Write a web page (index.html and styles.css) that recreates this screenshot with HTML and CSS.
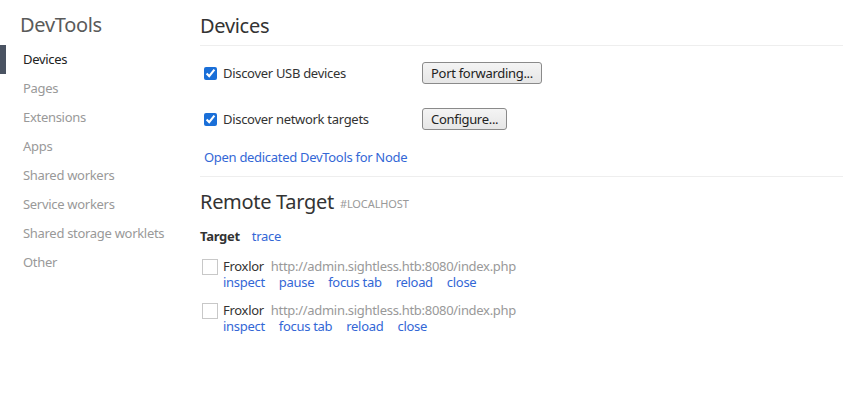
FILE: index.html
```html
<!DOCTYPE html>
<html>
<head>
<meta charset="utf-8">
<link rel="stylesheet" href="styles.css">
</head>
<body>
<div class="page">
  <nav class="sidebar">
    <h1 class="side-title">DevTools</h1>
    <ul class="side-list">
      <li class="side-item active">Devices</li>
      <li class="side-item">Pages</li>
      <li class="side-item">Extensions</li>
      <li class="side-item">Apps</li>
      <li class="side-item">Shared workers</li>
      <li class="side-item">Service workers</li>
      <li class="side-item">Shared storage worklets</li>
      <li class="side-item">Other</li>
    </ul>
  </nav>
  <main class="main">
    <h2 class="page-title">Devices</h2>
    <section class="settings">
      <div class="setting-row">
        <label class="setting-label"><input type="checkbox" class="cb" checked>Discover USB devices</label>
        <button class="btn">Port forwarding...</button>
      </div>
      <div class="setting-row">
        <label class="setting-label"><input type="checkbox" class="cb" checked>Discover network targets</label>
        <button class="btn">Configure...</button>
      </div>
      <div class="node-link"><a class="link">Open dedicated DevTools for Node</a></div>
    </section>
    <h2 class="section-title">Remote Target <span class="host">#LOCALHOST</span></h2>
    <div class="target-head"><span class="target-label">Target</span><a class="link">trace</a></div>
    <div class="target">
      <span class="box"></span>
      <div class="target-body">
        <div class="target-name"><span class="name">Froxlor</span><span class="url">http://admin.sightless.htb:8080/index.php</span></div>
        <div class="actions"><a class="link">inspect</a><a class="link">pause</a><a class="link">focus tab</a><a class="link">reload</a><a class="link">close</a></div>
      </div>
    </div>
    <div class="target">
      <span class="box"></span>
      <div class="target-body">
        <div class="target-name"><span class="name">Froxlor</span><span class="url">http://admin.sightless.htb:8080/index.php</span></div>
        <div class="actions"><a class="link">inspect</a><a class="link">focus tab</a><a class="link">reload</a><a class="link">close</a></div>
      </div>
    </div>
  </main>
</div>
</body>
</html>
```
FILE: styles.css
```css
* { box-sizing: border-box; }
html, body { margin: 0; padding: 0; background: #fff; }
body {
  font-family: "Noto Sans", "DejaVu Sans", sans-serif;
  font-size: 13px;
  letter-spacing: -0.3px;
  color: #333;
}
.page { display: flex; min-height: 415px; }
.sidebar { width: 200px; flex: none; }
.side-title {
  margin: 0;
  height: 45px;
  padding: 4px 0 0 20px;
  display: flex;
  align-items: center;
  font-size: 20px;
  font-weight: 400;
  color: #5a5a5a;
}
.side-list { list-style: none; margin: 0; padding: 0; }
.side-item {
  height: 29px;
  line-height: 29px;
  padding-left: 17px;
  color: #999;
  border-left: 6px solid transparent;
}
.side-item.active { color: #222; border-left-color: #4a5362; }
.main { flex: 1; }
.page-title {
  margin: 0;
  height: 46px;
  padding-top: 5px;
  display: flex;
  align-items: center;
  font-size: 20px;
  font-weight: 400;
  color: #333;
  border-bottom: 1px solid #eee;
}
.settings { padding-top: 4px; padding-bottom: 9px; border-bottom: 1px solid #eee; }
.setting-row { height: 46px; display: flex; align-items: center; }
.setting-label { width: 222px; display: flex; align-items: center; color: #333; }
.cb {
  width: 13px; height: 13px;
  margin: 0 6px 0 4px;
  accent-color: #1a6fd8;
}
.btn {
  font-family: inherit;
  font-size: 13px;
  letter-spacing: -0.3px;
  color: #222;
  height: 22px;
  padding: 0 8px;
  border: 1px solid #8a8a8a;
  border-radius: 3px;
  background: linear-gradient(#f4f4f4, #e6e6e6);
}
.node-link { height: 20px; line-height: 20px; margin-top: 5px; padding-left: 4px; }
.link { color: #3367d6; text-decoration: none; cursor: pointer; }
.section-title {
  margin: 0;
  height: 48px;
  display: flex;
  align-items: center;
  gap: 6px;
  font-size: 20px;
  font-weight: 400;
  color: #333;
}
.host { font-size: 11px; color: #999; padding-top: 5px; letter-spacing: -0.1px; }
.target-head { height: 20px; line-height: 20px; margin-top: 1px; display: flex; gap: 12px; }
.target-label { font-weight: 700; color: #333; }
.target { display: flex; margin-top: 12px; }
.box {
  width: 16px; height: 16px;
  margin: 1px 5px 0 2px;
  border: 1px solid #c8c8c8;
  background: #fff;
  flex: none;
}
.target-body { display: flex; flex-direction: column; }
.target-name { height: 16px; line-height: 16px; display: flex; gap: 7px; }
.name { color: #333; }
.url { color: #999; }
.actions { height: 16px; line-height: 16px; display: flex; gap: 14px; }
```
